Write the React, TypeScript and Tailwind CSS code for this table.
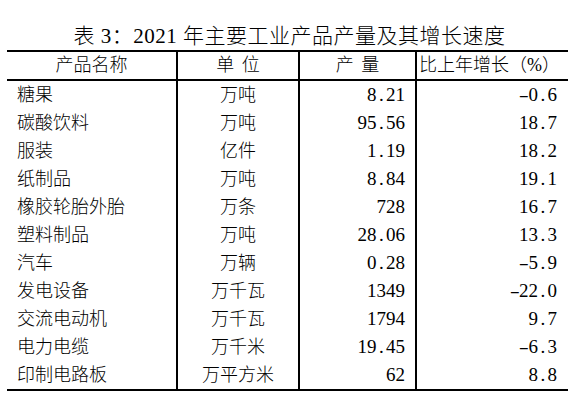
import React from "react";

const rows: [string, string, string, string][] = [
  ["糖果", "万吨", "8.21", "-0.6"],
  ["碳酸饮料", "万吨", "95.56", "18.7"],
  ["服装", "亿件", "1.19", "18.2"],
  ["纸制品", "万吨", "8.84", "19.1"],
  ["橡胶轮胎外胎", "万条", "728", "16.7"],
  ["塑料制品", "万吨", "28.06", "13.3"],
  ["汽车", "万辆", "0.28", "-5.9"],
  ["发电设备", "万千瓦", "1349", "-22.0"],
  ["交流电动机", "万千瓦", "1794", "9.7"],
  ["电力电缆", "万千米", "19.45", "-6.3"],
  ["印制电路板", "万平方米", "62", "8.8"],
];

function Num({ v }: { v: string }) {
  return (
    <span className="inline-flex font-normal">
      {v.split("").map((c, i) => (
        <span
          key={i}
          className={
            c === "-"
              ? "inline-block w-[9.5px] text-center scale-x-[1.6]"
              : "inline-block w-[9.5px] text-center"
          }
        >
          {c}
        </span>
      ))}
    </span>
  );
}

export default function App() {
  const font = {
    fontFamily: '"Liberation Serif", "Noto Sans CJK SC", serif',
  };
  return (
    <div
      className="w-[578px] h-[404px] bg-white text-black overflow-hidden font-light"
      style={font}
    >
      <div className="pt-[26px] pb-[3px] text-[21px] leading-[21px] text-center pl-[1px] tracking-[0.5px]">
        表 3：2021 年主要工业产品产量及其增长速度
      </div>
      <div className="ml-[7px] w-[561px] border-t-2 border-b-2 border-black">
        <div className="grid grid-cols-[169px_122px_117px_153px] h-[29px] border-b-2 border-black text-[18px] leading-[27px]">
          <div className="text-center">产品名称</div>
          <div className="text-center border-l-2 border-black [word-spacing:3px]">单 位</div>
          <div className="text-center border-l-2 border-black [word-spacing:3px]">产 量</div>
          <div className="text-center border-l-2 border-black pr-[6px]">比上年增长（%）</div>
        </div>
        {rows.map((r, i) => (
          <div
            key={i}
            className="grid grid-cols-[169px_122px_117px_153px] h-[28px] text-[18px] leading-[28px]"
          >
            <div className="pl-[10px]">{r[0]}</div>
            <div className="text-center border-l-2 border-black">{r[1]}</div>
            <div className="text-right border-l-2 border-black pr-[10px] text-[19px]">
              <Num v={r[2]} />
            </div>
            <div className="text-right border-l-2 border-black pr-[11px] text-[19px]">
              <Num v={r[3]} />
            </div>
          </div>
        ))}
      </div>
    </div>
  );
}
